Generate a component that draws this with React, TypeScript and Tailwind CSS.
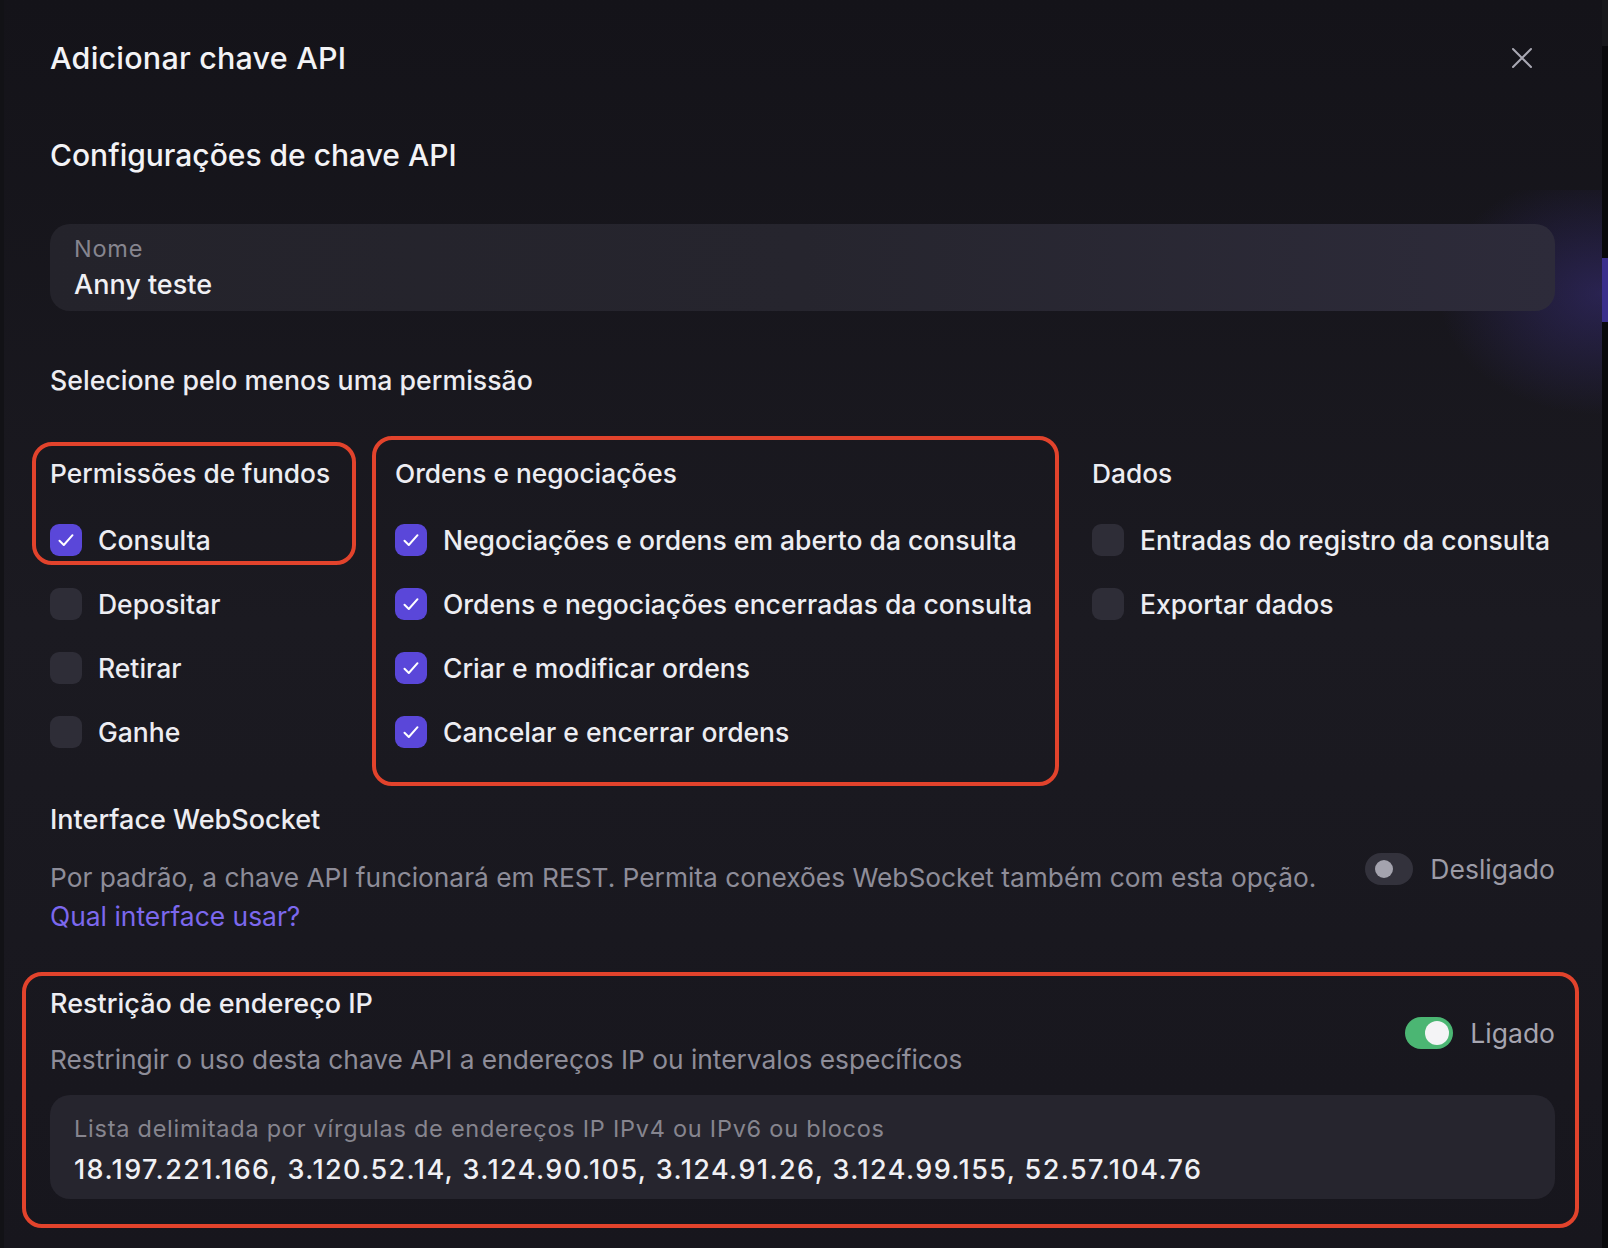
import React from "react";

function Check({ checked }: { checked: boolean }) {
  return (
    <div
      className={
        "w-[32px] h-[32px] rounded-[9px] flex items-center justify-center shrink-0 " +
        (checked ? "bg-[#5a47d9]" : "bg-[#2e2d37]")
      }
    >
      {checked && (
        <svg width="32" height="32" viewBox="0 0 32 32" fill="none">
          <path d="M9.5 16.8 L13.8 21 L22.5 11.2" stroke="#ffffff" strokeWidth="2" strokeLinecap="round" strokeLinejoin="round" />
        </svg>
      )}
    </div>
  );
}

function Row({ label, checked }: { label: string; checked: boolean }) {
  return (
    <div className="flex items-center gap-[16px] h-[32px]">
      <Check checked={checked} />
      <span className="text-[26.5px] leading-[32px] font-medium text-[#ededf2] whitespace-nowrap">{label}</span>
    </div>
  );
}

function Column({ title, items }: { title: string; items: [string, boolean][] }) {
  return (
    <div className="flex flex-col">
      <div className="text-[26.3px] leading-[36px] h-[36px] font-medium text-[#ededf2] whitespace-nowrap">{title}</div>
      <div className="flex flex-col gap-[32px] mt-[32px]">
        {items.map(([l, c]) => (
          <Row key={l} label={l} checked={c} />
        ))}
      </div>
    </div>
  );
}

export default function App() {
  return (
    <div className="w-[1608px] h-[1248px] bg-[#0b0b0e] flex overflow-hidden font-['Inter','Noto_Sans',sans-serif]">
      <div className="w-[4px] h-full bg-[#121216]" />
      <div className="relative w-[1598px] h-full bg-gradient-to-b from-[#141319] via-[#1b1a21] to-[#17161d] pl-[46px] pr-[47px] pt-[40px]">
        {/* glow near right */}
        <div className="absolute right-0 top-[190px] w-[170px] h-[230px] bg-[radial-gradient(ellipse_at_100%_45%,rgba(80,62,190,0.32),transparent_68%)] pointer-events-none" />

        <div className="flex items-center justify-between h-[36px]">
          <div className="text-[30.5px] leading-[36px] tracking-[0.2px] font-medium text-[#f3f3f6]">Adicionar chave API</div>
          <svg className="mr-[22px]" width="22" height="22" viewBox="0 0 22 22" fill="none">
            <path d="M2 2 L20 20 M20 2 L2 20" stroke="#a9a8b3" strokeWidth="2" strokeLinecap="round" />
          </svg>
        </div>

        <div className="mt-[61px] text-[30px] leading-[36px] font-medium text-[#f3f3f6]">Configurações de chave API</div>

        <div className="relative mt-[51px] h-[87px] rounded-[20px] bg-gradient-to-r from-[#24232b] via-[#26252e] to-[#2d2b3a] pl-[24px] pt-[11px]">
          <div className="text-[23.5px] leading-[28px] tracking-[0.75px] text-[#86858f]">Nome</div>
          <div className="mt-[5px] text-[27px] leading-[34px] font-medium text-[#f0f0f4]">Anny teste</div>
        </div>

        <div className="mt-[51px] text-[26.7px] leading-[36px] font-medium text-[#ededf2]">Selecione pelo menos uma permissão</div>

        <div className="mt-[58px] grid grid-cols-[345px_697px_1fr]">
          <Column
            title="Permissões de fundos"
            items={[
              ["Consulta", true],
              ["Depositar", false],
              ["Retirar", false],
              ["Ganhe", false],
            ]}
          />
          <Column
            title="Ordens e negociações"
            items={[
              ["Negociações e ordens em aberto da consulta", true],
              ["Ordens e negociações encerradas da consulta", true],
              ["Criar e modificar ordens", true],
              ["Cancelar e encerrar ordens", true],
            ]}
          />
          <Column
            title="Dados"
            items={[
              ["Entradas do registro da consulta", false],
              ["Exportar dados", false],
            ]}
          />
        </div>

        <div className="mt-[54px] flex items-center justify-between">
          <div className="flex flex-col">
            <div className="text-[27px] leading-[36px] font-medium text-[#ededf2]">Interface WebSocket</div>
            <div className="mt-[20px] text-[26.3px] leading-[39px] text-[#8e8d99] whitespace-nowrap">
              Por padrão, a chave API funcionará em REST. Permita conexões WebSocket também com esta opção.
            </div>
            <div className="text-[26.4px] leading-[39px] text-[#7c68ee]">Qual interface usar?</div>
          </div>
          <div className="flex items-center gap-[17px]">
            <div className="w-[48px] h-[32px] rounded-full bg-[#33323c] flex items-center pl-[10px]">
              <div className="w-[18px] h-[18px] rounded-full bg-[#a4a3ae]" />
            </div>
            <span className="text-[26.5px] leading-[32px] text-[#9c9ba6]">Desligado</span>
          </div>
        </div>

        <div className="mt-[50px] flex items-center justify-between">
          <div className="flex flex-col">
            <div className="text-[27px] leading-[36px] font-medium text-[#ededf2]">Restrição de endereço IP</div>
            <div className="mt-[18px] text-[26.3px] leading-[39px] text-[#8e8d99] whitespace-nowrap">
              Restringir o uso desta chave API a endereços IP ou intervalos específicos
            </div>
          </div>
          <div className="flex items-center gap-[17px]">
            <div className="w-[48px] h-[32px] rounded-full bg-[#4bb673] flex items-center justify-end pr-[4px]">
              <div className="w-[24px] h-[24px] rounded-full bg-[#f4f4f6]" />
            </div>
            <span className="text-[26.5px] leading-[32px] text-[#a6a5b0]">Ligado</span>
          </div>
        </div>

        <div className="mt-[16px] h-[104px] rounded-[20px] bg-[#26252e] pl-[24px] pt-[20px]">
          <div className="text-[23.5px] leading-[28px] tracking-[0.75px] text-[#86858f] whitespace-nowrap">
            Lista delimitada por vírgulas de endereços IP IPv4 ou IPv6 ou blocos
          </div>
          <div className="mt-[10px] text-[27px] leading-[34px] tracking-[1.4px] font-medium text-[#f0f0f4] whitespace-nowrap">
            18.197.221.166, 3.120.52.14, 3.124.90.105, 3.124.91.26, 3.124.99.155, 52.57.104.76
          </div>
        </div>

        {/* annotation boxes */}
        <div className="absolute left-[28px] top-[442px] w-[324px] h-[123px] border-[4px] border-[#e2432c] rounded-[20px] pointer-events-none" />
        <div className="absolute left-[368px] top-[436px] w-[687px] h-[350px] border-[4px] border-[#e2432c] rounded-[20px] pointer-events-none" />
        <div className="absolute left-[18px] top-[972px] w-[1557px] h-[256px] border-[4px] border-[#e2432c] rounded-[20px] pointer-events-none" />
      </div>
      <div className="flex-1 h-full bg-[#09090c] flex flex-col">
        <div className="h-[46px] bg-[#18181c]" />
        <div className="mt-[212px] h-[64px] bg-[#3a2f8c]" />
      </div>
    </div>
  );
}
